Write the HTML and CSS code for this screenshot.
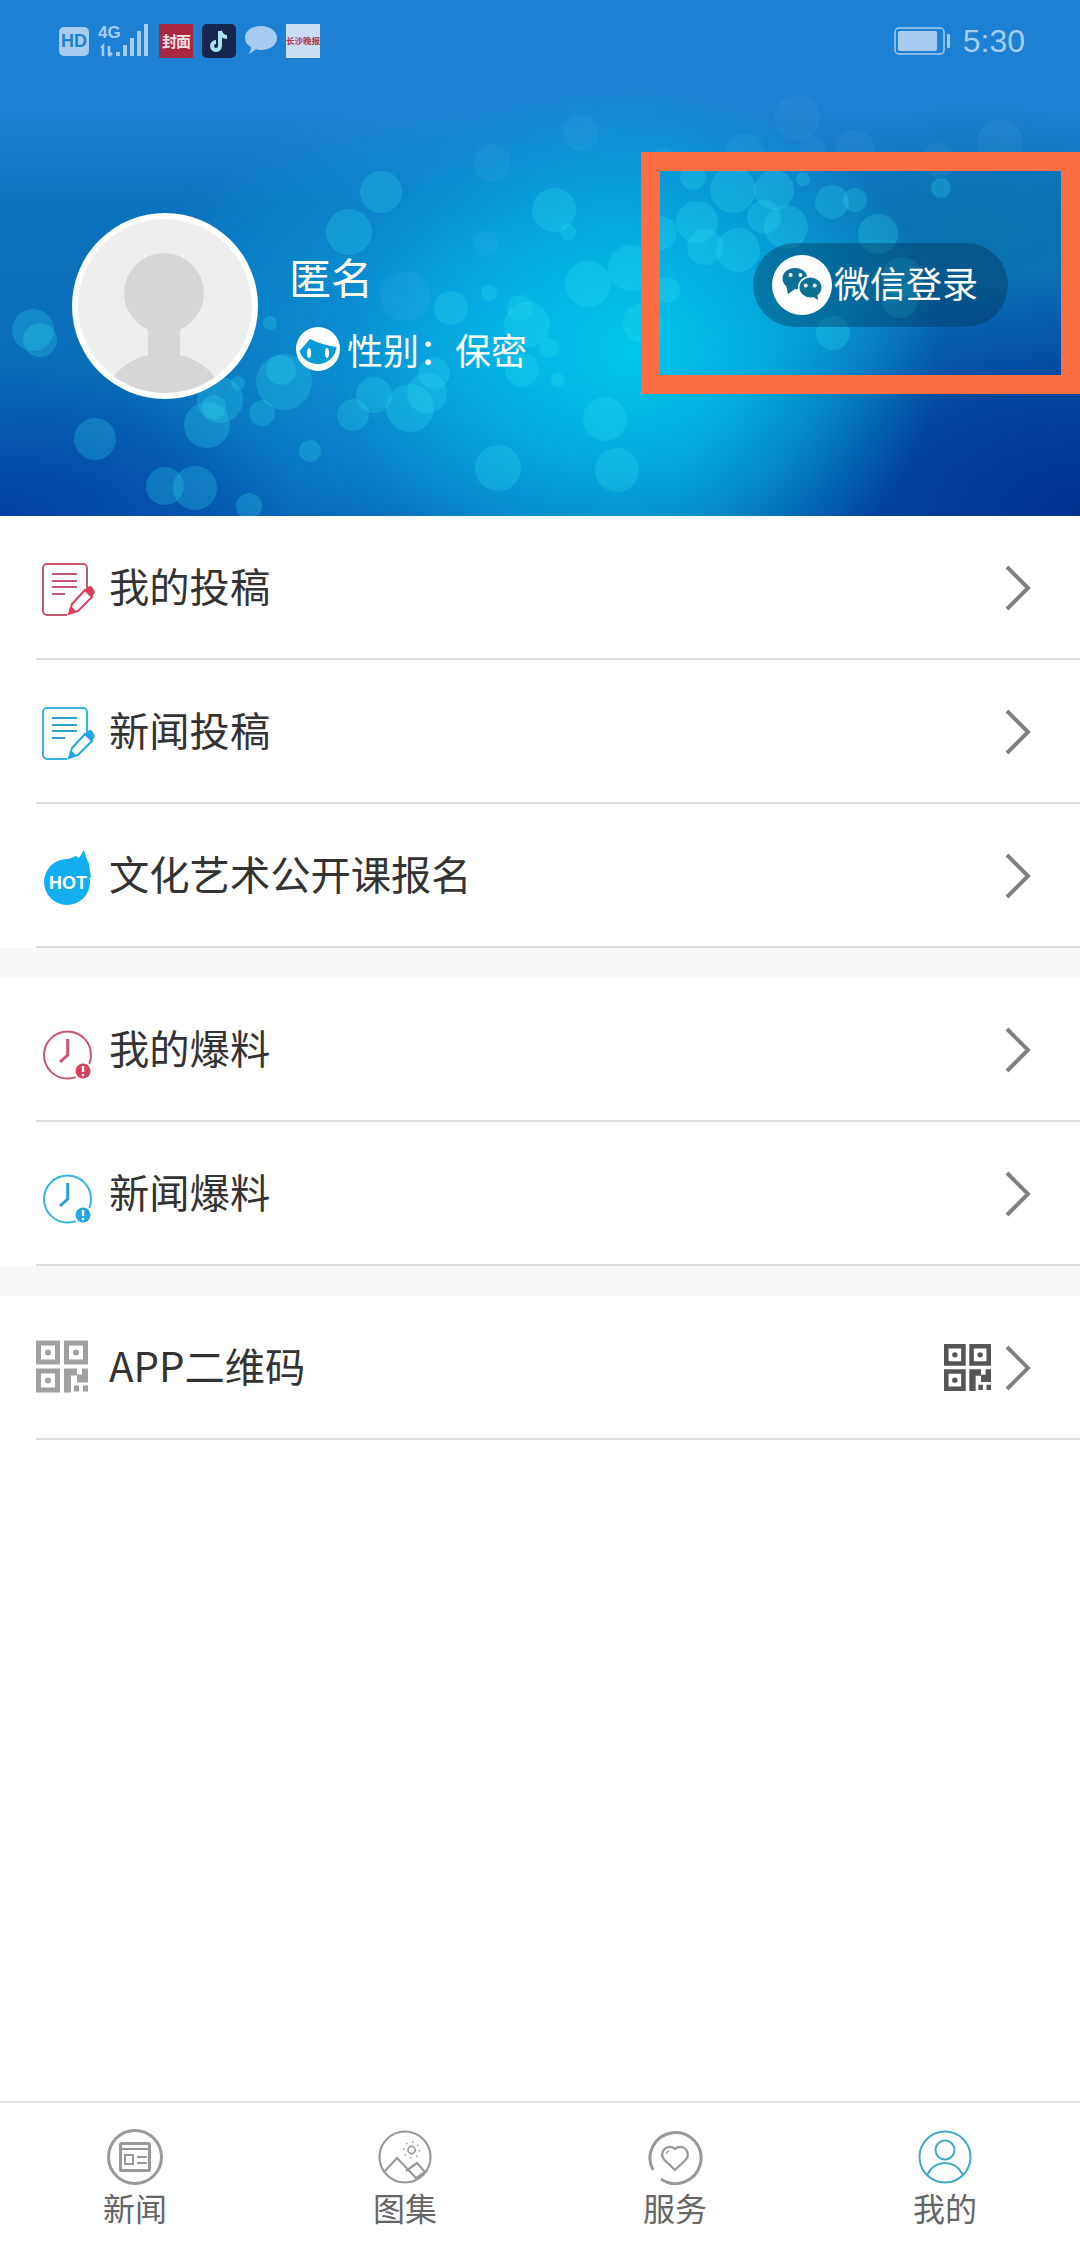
FILE: index.html
```html
<!DOCTYPE html>
<html lang="zh-CN">
<head>
  <meta charset="UTF-8">
  <meta name="viewport" content="width=device-width, initial-scale=1.0">
  <title>我的</title>
  <link rel="stylesheet" href="styles.css">
</head>
<body>
  <svg class="defs" width="0" height="0">
    <symbol id="qr" viewBox="0 0 52 52">
      <path fill-rule="evenodd" d="M0 0h24v24H0zM5 5v14h14V5zM28 0h24v24H28zM33 5v14h14V5zM0 28h24v24H0zM5 33v14h14V33z"/>
      <circle cx="12" cy="12" r="3"/>
      <circle cx="40" cy="12" r="3"/>
      <circle cx="12" cy="40" r="3"/>
      <path d="M28 28h13v6h5v-6h6v14H41v-7h-6v17h-7z"/>
      <path d="M38 45h5v6h-5zM47 45h5v6h-5z"/>
    </symbol>
    <symbol id="chevron" viewBox="0 0 26 46">
      <path d="M2 2l21 21L2 44" fill="none" stroke="currentColor" stroke-width="4"/>
    </symbol>
  </svg>

  <div class="page">
    <header class="header">
      <svg class="bokeh" width="1080" height="516" viewBox="0 0 1080 516">
        <g fill="#8fd8f5" fill-opacity=".07">
          <circle cx="581" cy="133" r="18"/><circle cx="797" cy="118" r="23"/><circle cx="1000" cy="142" r="23"/>
          <circle cx="855" cy="150" r="20"/><circle cx="939" cy="160" r="17"/><circle cx="745" cy="153" r="20"/>
          <circle cx="812" cy="148" r="13"/><circle cx="492" cy="163" r="19"/><circle cx="486" cy="243" r="13"/>
          <circle cx="405" cy="296" r="25"/><circle cx="664" cy="157" r="10"/>
        </g>
        <g fill="#30dcf0" fill-opacity=".26">
          <circle cx="381" cy="192" r="21"/><circle cx="349" cy="232" r="23"/><circle cx="451" cy="308" r="17"/>
          <circle cx="489" cy="293" r="8"/><circle cx="520" cy="308" r="13"/><circle cx="527" cy="325" r="23"/>
          <circle cx="33" cy="330" r="21"/><circle cx="40" cy="340" r="17"/><circle cx="270" cy="323" r="7"/>
          <circle cx="284" cy="382" r="28"/><circle cx="281" cy="370" r="15"/><circle cx="214" cy="407" r="12"/>
          <circle cx="207" cy="425" r="23"/><circle cx="220" cy="400" r="23"/><circle cx="238" cy="383" r="7"/>
          <circle cx="262" cy="413" r="13"/><circle cx="374" cy="395" r="18"/><circle cx="410" cy="408" r="24"/>
          <circle cx="434" cy="373" r="16"/><circle cx="353" cy="415" r="16"/><circle cx="427" cy="393" r="20"/>
          <circle cx="95" cy="439" r="21"/><circle cx="310" cy="451" r="11"/><circle cx="498" cy="468" r="23"/>
          <circle cx="165" cy="486" r="19"/><circle cx="195" cy="488" r="22"/><circle cx="249" cy="506" r="13"/>
          <circle cx="522" cy="370" r="17"/><circle cx="941" cy="188" r="10"/><circle cx="693" cy="177" r="13"/>
          <circle cx="733" cy="190" r="23"/><circle cx="774" cy="190" r="20"/><circle cx="803" cy="179" r="7"/>
          <circle cx="832" cy="202" r="17"/><circle cx="855" cy="200" r="12"/><circle cx="697" cy="222" r="21"/>
          <circle cx="764" cy="217" r="17"/><circle cx="786" cy="227" r="22"/><circle cx="738" cy="250" r="22"/>
          <circle cx="705" cy="247" r="18"/><circle cx="660" cy="233" r="17"/><circle cx="554" cy="210" r="22"/>
          <circle cx="568" cy="232" r="8"/><circle cx="878" cy="234" r="20"/><circle cx="902" cy="277" r="20"/>
          <circle cx="900" cy="300" r="18"/><circle cx="833" cy="333" r="17"/><circle cx="631" cy="268" r="23"/>
          <circle cx="588" cy="284" r="23"/><circle cx="667" cy="290" r="13"/><circle cx="643" cy="323" r="20"/>
          <circle cx="549" cy="348" r="10"/><circle cx="558" cy="380" r="7"/><circle cx="605" cy="419" r="22"/>
          <circle cx="617" cy="470" r="22"/>
        </g>
      </svg>

      <div class="status">
        <div class="status-left">
          <span class="hd">HD</span>
          <svg class="signal" viewBox="0 0 52 34" width="52" height="34">
            <text x="0" y="14" class="signal-text">4G</text>
            <path d="M3 24l2-2v10M11 22v10m0 0l3-3" fill="none" stroke="#a6cdf0" stroke-width="2.5"/>
            <path fill="#a6cdf0" d="M18 28h4v4h-4zM25 21h4v11h-4zM32 14h4v18h-4zM39 7h4v25h-4zM46 0h4v32h-4z"/>
          </svg>
          <span class="app-fengmian">封面</span>
          <svg class="app-icon" viewBox="0 0 34 34" width="34" height="34">
            <rect width="34" height="34" rx="5" fill="#15264f"/>
            <path d="M18 7v15a4 4 0 1 1-4-4M18 7c1 4 4 6 7 6" fill="none" stroke="#a9e4ee" stroke-width="4"/>
          </svg>
          <svg class="bubble" viewBox="0 0 32 30" width="32" height="30">
            <path fill="#a6cdf0" d="M16 0c9 0 16 5 16 12s-7 12-16 12c-2 0-3 0-5-1-2 2-5 4-8 5 2-2 3-4 3-7-4-2-6-5-6-9C0 5 7 0 16 0z"/>
          </svg>
          <span class="app-paper">长沙晚报</span>
        </div>
        <div class="status-right">
          <svg class="battery" viewBox="0 0 56 28" width="56" height="28">
            <rect x="1" y="1" width="49" height="26" rx="4" fill="none" stroke="#a6cdf0" stroke-width="1.5"/>
            <rect x="4" y="4" width="39" height="20" rx="2" fill="#a6cdf0"/>
            <rect x="53" y="7" width="3" height="14" rx="1" fill="#a6cdf0"/>
          </svg>
          <span class="time">5:30</span>
        </div>
      </div>

      <div class="profile">
        <svg class="avatar" viewBox="0 0 186 186" width="186" height="186">
          <defs><clipPath id="avatarClip"><circle cx="93" cy="93" r="87"/></clipPath></defs>
          <circle cx="93" cy="93" r="93" fill="#fff"/>
          <circle cx="93" cy="93" r="87" fill="#eee"/>
          <g clip-path="url(#avatarClip)" fill="#d6d6d6">
            <circle cx="92" cy="80" r="40"/>
            <rect x="76" y="100" width="32" height="50"/>
            <ellipse cx="92" cy="192" rx="60" ry="52"/>
          </g>
        </svg>
        <div class="info">
          <div class="name">匿名</div>
          <div class="gender">
            <svg viewBox="0 0 44 44" width="44" height="44">
              <circle cx="22" cy="22" r="22" fill="#fff"/>
              <path fill="#0a9ad6" d="M3.500 24L14 12q12 6 26.500 8a19 19 0 0 1-37 4z"/>
              <ellipse cx="13" cy="26" rx="2" ry="5" fill="#fff"/>
              <ellipse cx="31" cy="26" rx="2" ry="5" fill="#fff"/>
            </svg>
            <span>性别：保密</span>
          </div>
        </div>
        <button class="wechat" type="button">
          <svg viewBox="0 0 60 60" width="60" height="60">
            <circle cx="30" cy="30" r="30" fill="#fff"/>
            <ellipse cx="23" cy="23.500" rx="12.500" ry="10.500" fill="#0e6f95"/>
            <path fill="#0e6f95" d="M14 30l2 9 7-5z"/>
            <ellipse cx="38.500" cy="32.500" rx="12.500" ry="11.500" fill="#fff"/>
            <ellipse cx="38.500" cy="32.500" rx="11" ry="10" fill="#0e6f95"/>
            <path fill="#0e6f95" d="M40 41l6 4-1-8z"/>
            <circle cx="18.700" cy="20" r="2" fill="#fff"/><circle cx="28.400" cy="20" r="2" fill="#fff"/>
            <circle cx="33.700" cy="30.400" r="2" fill="#fff"/><circle cx="42.700" cy="30.400" r="2" fill="#fff"/>
          </svg>
          <span>微信登录</span>
        </button>
      </div>

      <div class="highlight"></div>
    </header>

    <section class="group">
      <a class="row">
        <svg class="row-icon" viewBox="0 0 60 70" width="60" height="70">
          <path d="M31 63H11a4 4 0 0 1-4-4V16a4 4 0 0 1 4-4h36a4 4 0 0 1 4 4v25" fill="none" stroke="#c8566e" stroke-width="2"/>
          <path d="M16 22h25M16 29h25M16 35h25M16 42h13" stroke="#c8566e" stroke-width="2.2"/>
          <path d="M36 52l13-14 7 7-14 14-9 3z" fill="#fff" stroke="#d9415a" stroke-width="2"/>
          <path d="M49 38l3-3a3 3 0 0 1 4 0l2 3a3 3 0 0 1 0 4l-2 3zM33 62l2-8 6 6z" fill="#d9415a"/>
        </svg>
        <span class="row-label">我的投稿</span>
        <svg class="chevron"><use href="#chevron"/></svg>
      </a>
      <a class="row">
        <svg class="row-icon" viewBox="0 0 60 70" width="60" height="70">
          <path d="M31 63H11a4 4 0 0 1-4-4V16a4 4 0 0 1 4-4h36a4 4 0 0 1 4 4v25" fill="none" stroke="#35b3dc" stroke-width="2"/>
          <path d="M16 22h25M16 29h25M16 35h25M16 42h13" stroke="#2f9fd0" stroke-width="2.2"/>
          <path d="M36 52l13-14 7 7-14 14-9 3z" fill="#fff" stroke="#21a6e6" stroke-width="2"/>
          <path d="M49 38l3-3a3 3 0 0 1 4 0l2 3a3 3 0 0 1 0 4l-2 3zM33 62l2-8 6 6z" fill="#21a6e6"/>
        </svg>
        <span class="row-label">新闻投稿</span>
        <svg class="chevron"><use href="#chevron"/></svg>
      </a>
      <a class="row">
        <svg class="row-icon" viewBox="0 0 60 70" width="60" height="70">
          <circle cx="31" cy="42" r="23" fill="#12aef0"/>
          <path d="M30 20l10-4 3 2 5-8 2 7 3 7 2 14z" fill="#12aef0"/>
          <text x="32" y="48.500" class="hot-text">HOT</text>
        </svg>
        <span class="row-label">文化艺术公开课报名</span>
        <svg class="chevron"><use href="#chevron"/></svg>
      </a>
    </section>
    <div class="band"></div>

    <section class="group">
      <a class="row">
        <svg class="row-icon" viewBox="0 0 60 70" width="60" height="70">
          <circle cx="31.500" cy="41" r="23.500" fill="none" stroke="#c8566e" stroke-width="2"/>
          <path d="M31.700 25v16L24 48" fill="none" stroke="#c8566e" stroke-width="3"/>
          <circle cx="47" cy="57" r="9.500" fill="#fff"/>
          <circle cx="47" cy="57" r="7.500" fill="#d9415a"/>
          <path d="M47 52v6" stroke="#fff" stroke-width="2.400"/><circle cx="47" cy="61" r="1.300" fill="#fff"/>
        </svg>
        <span class="row-label">我的爆料</span>
        <svg class="chevron"><use href="#chevron"/></svg>
      </a>
      <a class="row">
        <svg class="row-icon" viewBox="0 0 60 70" width="60" height="70">
          <circle cx="31.500" cy="41" r="23.500" fill="none" stroke="#35b3dc" stroke-width="2"/>
          <path d="M31.700 25v16L24 48" fill="none" stroke="#2f9fd0" stroke-width="3"/>
          <circle cx="47" cy="57" r="9.500" fill="#fff"/>
          <circle cx="47" cy="57" r="7.500" fill="#21a6e6"/>
          <path d="M47 52v6" stroke="#fff" stroke-width="2.400"/><circle cx="47" cy="61" r="1.300" fill="#fff"/>
        </svg>
        <span class="row-label">新闻爆料</span>
        <svg class="chevron"><use href="#chevron"/></svg>
      </a>
    </section>
    <div class="band"></div>

    <section class="group">
      <a class="row">
        <svg class="row-icon qr-gray" viewBox="0 0 60 70" width="60" height="70"><use href="#qr" x="0" y="8" width="52" height="53"/></svg>
        <span class="row-label">APP二维码</span>
        <svg class="qr-small"><use href="#qr"/></svg>
        <svg class="chevron"><use href="#chevron"/></svg>
      </a>
    </section>

    <div class="spacer"></div>

    <nav class="tabbar">
      <div class="tab">
        <svg viewBox="0 0 60 60" width="60" height="60" fill="none" stroke="#999" stroke-width="3">
          <circle cx="30" cy="30" r="26.500"/>
          <rect x="15.500" y="16.500" width="29" height="27" rx="1"/>
          <path d="M16 22h28M32 30h10M32 36h10" stroke-width="2"/>
          <rect x="20" y="28" width="8" height="9" stroke-width="2"/>
        </svg>
        <span>新闻</span>
      </div>
      <div class="tab">
        <svg viewBox="0 0 60 60" width="60" height="60" fill="none" stroke="#999" stroke-width="2.200">
          <circle cx="30" cy="30" r="25.500"/>
          <circle cx="36.600" cy="23" r="3.600" stroke-width="1.600"/>
          <circle cx="36.600" cy="23" r="8" stroke-width="1.500" stroke-dasharray="1.500 4.800"/>
          <path d="M9 45l13-14 20 21M31 44l11-8 8 9-10 7"/>
        </svg>
        <span>图集</span>
      </div>
      <div class="tab">
        <svg viewBox="0 0 60 60" width="60" height="60" fill="none" stroke="#999" stroke-width="3">
          <path d="M16 52A25.500 25.500 0 1 0 8 43"/>
          <path d="M30 43L19.500 33a7.500 7.500 0 0 1 10.500-11 7.500 7.500 0 0 1 10.500 11z" stroke-width="2.400" stroke-linejoin="round"/>
          <path d="M21.500 27a3 3 0 0 1 3-3" stroke-width="1.200"/>
        </svg>
        <span>服务</span>
      </div>
      <div class="tab">
        <svg viewBox="0 0 60 60" width="60" height="60" fill="none" stroke="#43a7c6" stroke-width="2">
          <circle cx="30" cy="30" r="25.500"/>
          <circle cx="30" cy="23" r="9.500"/>
          <path d="M12 48c4-8 10-12 18-12s14 4 18 12"/>
        </svg>
        <span>我的</span>
      </div>
    </nav>
  </div>
</body>
</html>
```

FILE: styles.css
```css
* {
  box-sizing: border-box;
}
body {
  margin: 0;
  background: #fff;
  font-family: "Noto Sans CJK SC", "Liberation Sans", sans-serif;
}
.defs {
  display: none;
}
.page {
  display: flex;
  flex-direction: column;
  width: 1080px;
  height: 2244px;
}

/* header */
.header {
  position: relative;
  height: 516px;
  overflow: hidden;
  color: #fff;
  background:
    radial-gradient(ellipse 300px 270px at 640px 350px, rgba(0, 205, 235, .85), rgba(0, 190, 232, .55) 50%, rgba(0, 160, 220, 0) 100%),
    radial-gradient(ellipse 400px 240px at 1080px 510px, rgba(0, 50, 145, 1), rgba(0, 58, 150, .8) 50%, rgba(0, 60, 150, 0) 100%),
    radial-gradient(ellipse 300px 160px at 0 520px, rgba(0, 60, 160, .9), rgba(0, 60, 160, 0) 100%),
    radial-gradient(ellipse 220px 130px at 980px 230px, rgba(10, 115, 170, .8), rgba(10, 115, 170, 0) 100%),
    radial-gradient(ellipse 420px 260px at 530px 340px, rgba(10, 165, 225, 1), rgba(10, 150, 215, 0) 100%),
    linear-gradient(#1e80d2 0, #1d80d2 110px, #0b72bc 210px, #0a6cb8 400px, #0862b4 516px);
}
.bokeh {
  position: absolute;
  top: 0;
  left: 0;
}
.status {
  position: relative;
  display: flex;
  align-items: center;
  justify-content: space-between;
  height: 82px;
  padding: 0 55px 0 59px;
}
.status-left {
  display: flex;
  align-items: center;
  gap: 9px;
}
.status-right {
  display: flex;
  align-items: center;
  gap: 13px;
}
.hd {
  width: 30px;
  height: 29px;
  border-radius: 5px;
  background: #a6cdf0;
  color: #1f7fcf;
  font: bold 18px/29px "Liberation Sans", sans-serif;
  text-align: center;
}
.signal-text {
  fill: #a6cdf0;
  font: bold 17px "Liberation Sans", sans-serif;
}
.app-fengmian {
  width: 34px;
  height: 34px;
  background: #a8293f;
  color: #f3dfe2;
  font-size: 15px;
  font-weight: bold;
  line-height: 34px;
  text-align: center;
  white-space: nowrap;
  letter-spacing: -1px;
}
.app-paper {
  width: 34px;
  height: 34px;
  background: #c9def3;
  color: #b3344a;
  font-size: 8.5px;
  font-weight: bold;
  line-height: 32px;
  text-align: center;
  white-space: nowrap;
}
.time {
  color: #a6cdf0;
  font: 32px/40px "Liberation Sans", sans-serif;
}

/* profile */
.profile {
  position: relative;
  display: flex;
  align-items: flex-start;
  margin-top: 131px;
  padding: 0 72px;
}
.info {
  margin: 38px 0 0 31px;
}
.name {
  font-size: 42px;
  line-height: 50px;
}
.gender {
  display: flex;
  align-items: center;
  gap: 7px;
  margin-top: 26px;
  padding-left: 7px;
  font-size: 36px;
  line-height: 44px;
}
.wechat {
  display: flex;
  align-items: center;
  gap: 2px;
  height: 84px;
  margin: 30px 0 0 auto;
  padding: 0 30px 0 19px;
  border: none;
  border-radius: 42px;
  background: rgba(0, 45, 80, .38);
  color: #fff;
  font-family: inherit;
  font-size: 36px;
}
.wechat span {
  padding-bottom: 6px;
}
.highlight {
  position: absolute;
  top: 152px;
  left: 641px;
  right: 0;
  height: 242px;
  border: 19px solid #fb6e44;
}

/* list */
.group {
  background: #fff;
}
.row {
  display: flex;
  align-items: center;
  height: 144px;
  margin-left: 36px;
  padding-right: 49px;
  border-bottom: 2px solid #dcdcdc;
  color: #333;
}
.row-icon {
  flex: none;
  width: 60px;
  height: 70px;
  margin-right: 13px;
  color: #a0a0a0;
  fill: currentColor;
}
.row-label {
  flex: 1;
  padding-bottom: 6px;
  font-size: 40.3px;
}
.hot-text {
  fill: #fff;
  font: bold 18px "Liberation Sans", sans-serif;
  text-anchor: middle;
}
.chevron {
  width: 26px;
  height: 46px;
  margin-top: 1px;
  color: #808080;
}
.qr-small {
  width: 47px;
  height: 47px;
  margin-right: 14px;
  fill: #555;
}
.band {
  height: 30px;
  background: #f7f7f7;
}
.spacer {
  flex: 1;
}

/* tab bar */
.tabbar {
  display: grid;
  grid-template-columns: repeat(4, 1fr);
  height: 143px;
  padding-top: 24px;
  border-top: 2px solid #e2e2e2;
}
.tab {
  display: flex;
  flex-direction: column;
  align-items: center;
  color: #666;
  font-size: 32px;
  line-height: 40px;
}
```
